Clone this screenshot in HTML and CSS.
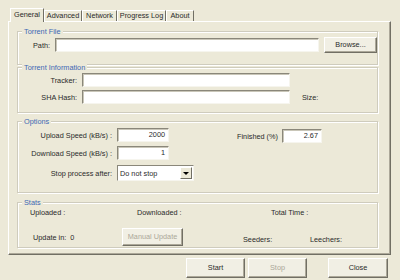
FILE: index.html
```html
<!DOCTYPE html>
<html>
<head>
	<title>General</title>
	<link rel="stylesheet" href="styles.css">
</head>
<body>
<div class="dlg">
	<div class="tabs">
		<span class="tab on w-gen">General</span>
		<span class="tab w-adv">Advanced</span>
		<span class="tab w-net">Network</span>
		<span class="tab w-log">Progress Log</span>
		<span class="tab w-abt">About</span>
	</div>
	<div class="panel">
		<div class="grp g-file">
			<p class="grp-title">Torrent File</p>
			<div class="row r-path">
				<label class="lbl">Path:</label>
				<span class="field f-path"></span>
				<span class="btn b-browse">Browse...</span>
			</div>
		</div>
		<div class="grp g-info">
			<p class="grp-title">Torrent Information</p>
			<div class="row r-info">
				<label class="lbl">Tracker:</label>
				<span class="field f-info"></span>
			</div>
			<div class="row r-info r-gap3">
				<label class="lbl">SHA Hash:</label>
				<span class="field f-info"></span>
				<label class="size">Size:</label>
			</div>
		</div>
		<div class="grp g-opt">
			<p class="grp-title">Options</p>
			<div class="row r-opt">
				<label class="lbl">Upload Speed (kB/s) :</label>
				<span class="field f-num">2000</span>
				<label class="lbl fin-lbl">Finished (%)</label>
				<span class="field f-fin">2.67</span>
			</div>
			<div class="row r-opt r-gap4">
				<label class="lbl">Download Speed (kB/s) :</label>
				<span class="field f-num">1</span>
			</div>
			<div class="row r-opt r-gap5">
				<label class="lbl">Stop process after:</label>
				<span class="sel">
					<span class="sel-txt">Do not stop</span>
					<span class="sel-btn"><i></i></span>
				</span>
			</div>
		</div>
		<div class="grp g-stats">
			<p class="grp-title">Stats</p>
			<div class="row st-top">
				<span class="st-up">Uploaded :</span>
				<span class="st-down">Downloaded :</span>
				<span>Total Time :</span>
			</div>
			<div class="row st-bot">
				<span class="st-upd">Update in:&nbsp; 0</span>
				<span class="btn off b-manual">Manual Update</span>
				<span class="st-seed">Seeders:</span>
				<span class="st-leech">Leechers:</span>
			</div>
		</div>
	</div>
	<div class="foot">
		<span class="btn b-foot">Start</span>
		<span class="btn off b-foot b-stop">Stop</span>
		<span class="btn b-foot b-close">Close</span>
	</div>
</div>
</body>
</html>
```

FILE: styles.css
```css
body{
	margin:0;
	background:#ece9d8;
	font-family:"Liberation Sans",Arial,sans-serif;
	font-size:7.3px;
	color:#2a2a2a;
}
p{
	margin:0;
}
.dlg{
	padding:8px 9px 0 8px;
}
.tabs{
	display:flex;
	align-items:flex-end;
	height:13px;
	padding-left:2px;
}
.tab{
	box-sizing:border-box;
	height:11px;
	line-height:10px;
	text-align:center;
	border:1px solid #fff;
	border-right-color:#716f64;
	border-bottom:none;
}
.tab.on{
	height:14px;
	line-height:12px;
	margin-bottom:-1px;
	background:#ece9d8;
	position:relative;
	z-index:1;
}
.w-gen{ width:34px; }
.w-adv{ width:38px; }
.w-net{ width:35px; }
.w-log{ width:49px; }
.w-abt{ width:28px; }

.panel{
	box-sizing:border-box;
	width:383px;
	height:234px;
	padding:9px 12px 0 8px;
	border:1px solid;
	border-color:#fff #716f64 #716f64 #fff;
	box-shadow:inset -1px -1px 0 #aca899;
}
.grp{
	border:1px solid #cfccbd;
	box-shadow:inset 1px 1px 0 #fff, 1px 1px 0 #fff;
}
.grp-title{
	width:fit-content;
	margin:-5px 0 0 4px;
	padding:0 2px;
	line-height:9px;
	background:#ece9d8;
	color:#3d68b4;
}
.g-file{ height:32px; }
.g-info{ height:44px; margin-top:2px; }
.g-opt{ height:70px; margin-top:8px; }
.g-stats{ height:44px; margin-top:9px; }

.row{
	display:flex;
	align-items:center;
}
.lbl{
	flex:none;
	text-align:right;
}
.field{
	box-sizing:border-box;
	display:block;
	height:14px;
	line-height:12px;
	padding-right:3px;
	text-align:right;
	background:#fff;
	border:1px solid;
	border-color:#8a877a #f6f5ee #f6f5ee #8a877a;
	box-shadow:inset 1px 1px 0 #c9c6b8;
}
.btn{
	box-sizing:border-box;
	display:block;
	text-align:center;
	background:#f1efe4;
	border:1px solid;
	border-color:#fff #716f64 #716f64 #fff;
	box-shadow:inset -1px -1px 0 #aca899;
}
.btn.off{
	color:#aca899;
}

.r-path{ height:16px; margin-top:1px; }
.r-path .lbl{ width:32px; margin-right:5px; }
.f-path{ width:264px; margin-right:5px; }
.b-browse{ width:53px; height:16px; line-height:14px; }

.r-info{ height:14px; margin-top:1px; }
.r-gap3{ margin-top:3px; }
.r-info .lbl{ width:59px; margin-right:5px; }
.f-info{ width:208px; }
.size{ margin-left:12px; }

.r-opt{ height:14px; margin-top:2px; }
.r-gap4{ margin-top:4px; }
.r-gap5{ margin-top:5px; height:16px; }
.r-opt .lbl{ width:94px; margin-right:5px; }
.f-num{ width:52px; }
.r-opt .fin-lbl{ width:auto; margin:2px 4px 0 68px; }
.f-fin{ width:40px; margin-top:2px; }
.sel{
	box-sizing:border-box;
	display:flex;
	align-items:center;
	width:77px;
	height:16px;
	background:#fff;
	border:1px solid;
	border-color:#8a877a #f6f5ee #f6f5ee #8a877a;
}
.sel-txt{
	flex:1;
	padding-left:2px;
}
.sel-btn{
	box-sizing:border-box;
	display:flex;
	align-items:center;
	justify-content:center;
	width:12px;
	height:12px;
	margin-right:1px;
	background:#ece9d8;
	border:1px solid;
	border-color:#fff #716f64 #716f64 #fff;
}
.sel-btn i{
	width:0;
	height:0;
	border-top:3px solid #000;
	border-left:3px solid transparent;
	border-right:3px solid transparent;
}

.st-top{
	height:9px;
	margin-top:1px;
	padding-left:12px;
}
.st-up{ width:107px; }
.st-down{ width:134px; }
.st-bot{
	height:18px;
	margin-top:11px;
	padding-left:15px;
}
.st-upd{ width:89px; }
.b-manual{ width:61px; height:18px; line-height:16px; }
.st-seed{ width:67px; margin:5px 0 0 60px; }
.st-leech{ margin-top:5px; }

.foot{
	display:flex;
	justify-content:flex-end;
	margin-top:3px;
	padding-right:3px;
}
.b-foot{ width:59px; height:20px; line-height:18px; }
.b-stop{ margin-left:3px; }
.b-close{ width:60px; margin-left:21px; }
```
